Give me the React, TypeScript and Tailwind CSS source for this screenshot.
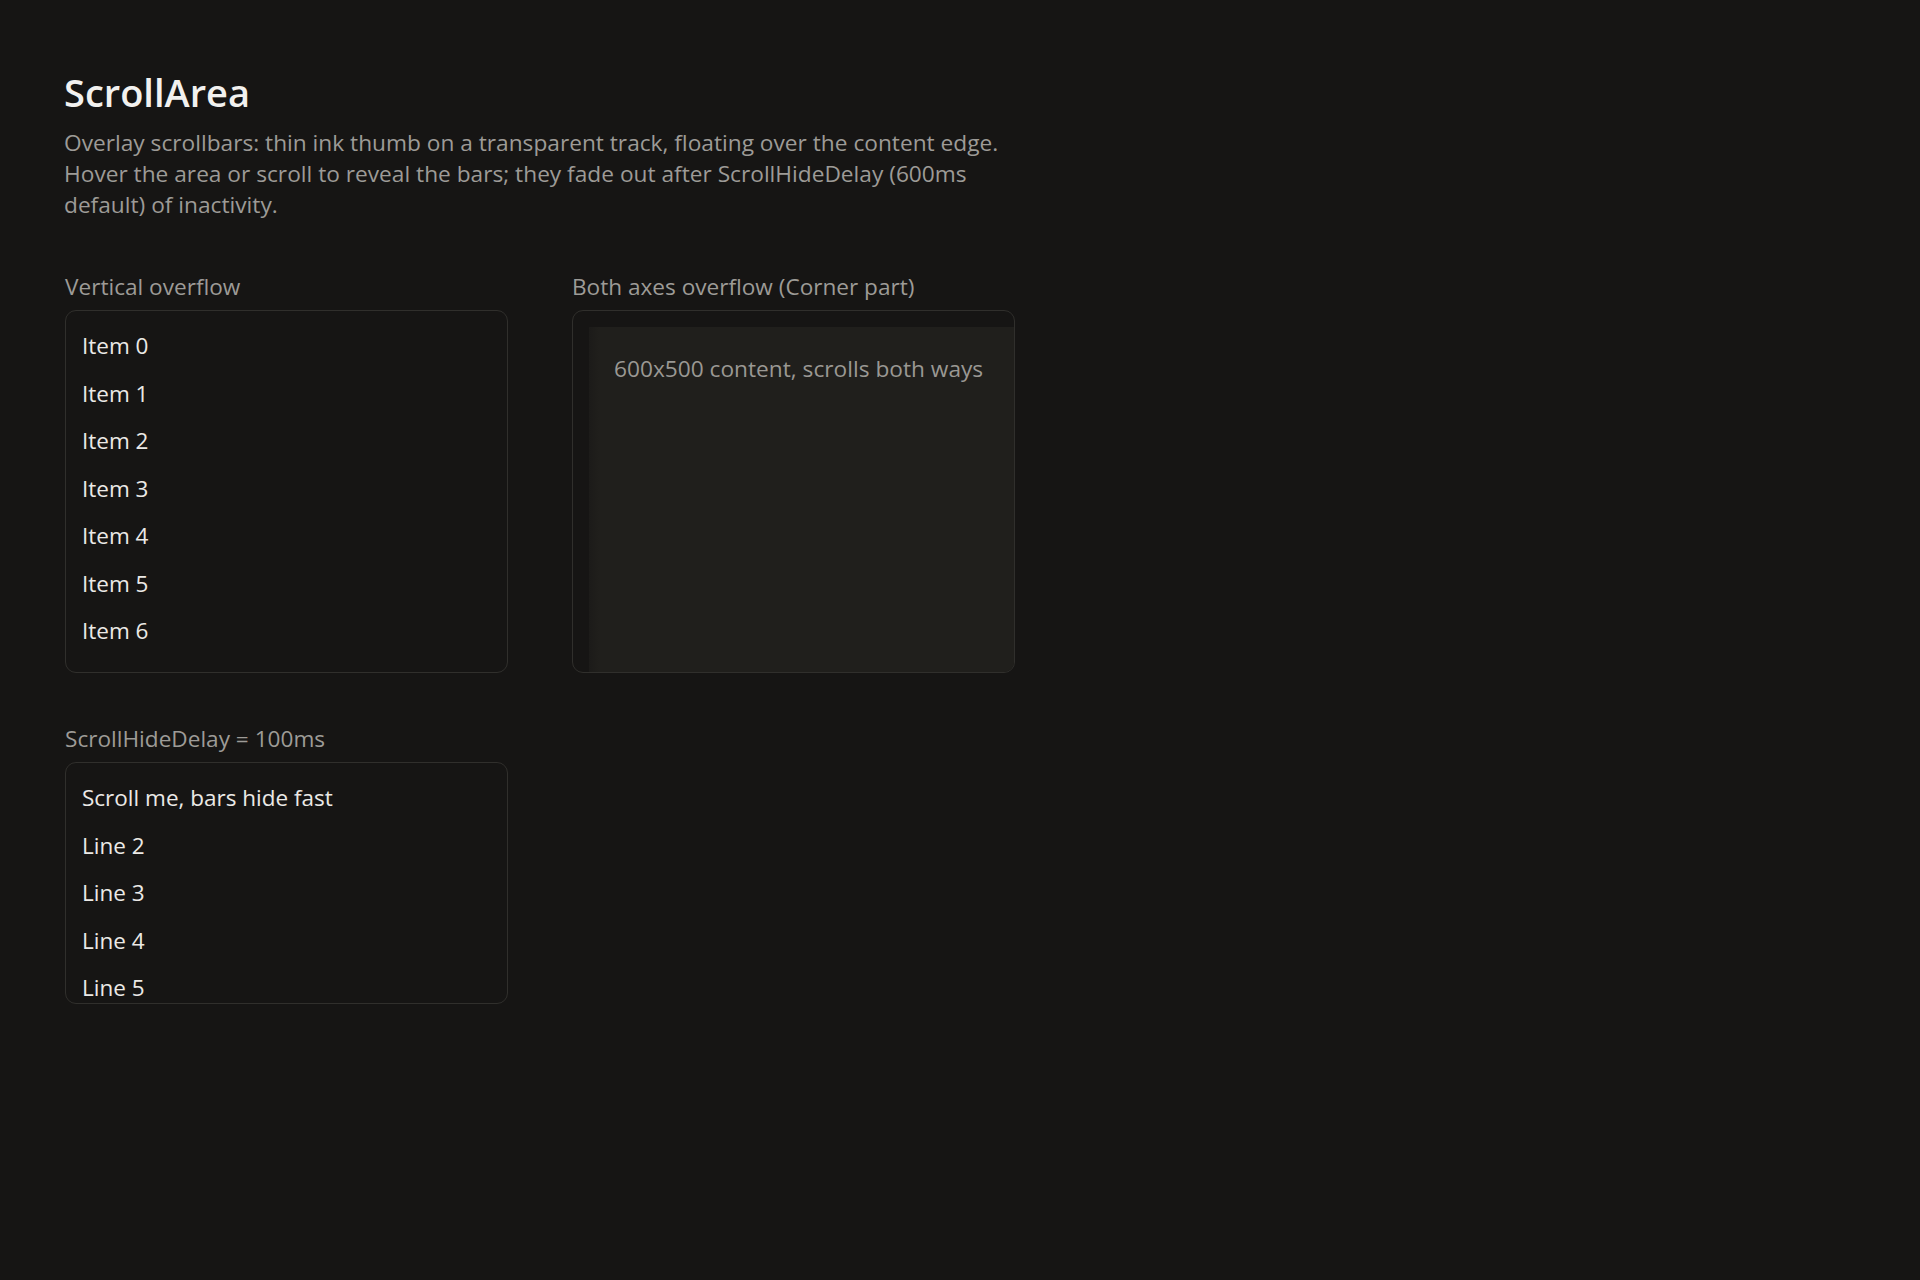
const items = ["Item 0", "Item 1", "Item 2", "Item 3", "Item 4", "Item 5", "Item 6"];
const lines = ["Scroll me, bars hide fast", "Line 2", "Line 3", "Line 4", "Line 5"];

function Section({ label, children }: { label: string; children: React.ReactNode }) {
  return (
    <div className="flex flex-col">
      <div className="mb-2 text-[22.6px] leading-[30px] text-[#9d9b97]">{label}</div>
      {children}
    </div>
  );
}

export default function App() {
  return (
    <div className="min-h-screen bg-[#161514] pl-16 pt-[68px] font-['Open_Sans',sans-serif]">
      <h1 className="text-[38px] leading-[48px] font-semibold text-[#f2f1ef]">ScrollArea</h1>
      <p className="mt-[11px] max-w-[960px] text-[22.7px] leading-[31px] text-[#9d9b97]">
        Overlay scrollbars: thin ink thumb on a transparent track, floating over the content edge. Hover the area or scroll to reveal the bars; they fade out after ScrollHideDelay (600ms default) of inactivity.
      </p>

      <div className="ml-px mt-[52px] grid grid-cols-[443px_443px] gap-x-16 gap-y-[51px]">
        <Section label="Vertical overflow">
          <div className="h-[363px] overflow-hidden rounded-[11px] border-[1.5px] border-[#302f2c] bg-[#161514]">
            <div className="px-4 pt-[11px]">
              {items.map((t) => (
                <div key={t} className="h-[47.5px] text-[22.5px] leading-[47.5px] text-[#ebe9e6]">
                  {t}
                </div>
              ))}
            </div>
          </div>
        </Section>

        <Section label="Both axes overflow (Corner part)">
          <div className="h-[363px] overflow-hidden rounded-[11px] border-[1.5px] border-[#302f2c] bg-[#161514] pl-4 pt-4">
            <div className="h-[500px] w-[600px] bg-[linear-gradient(90deg,#1c1b19_0px,#201f1c_10px)] pl-[25px] pt-[26px] text-[22.7px] leading-[31px] text-[#9a9893]">
              600x500 content, scrolls both ways
            </div>
          </div>
        </Section>

        <Section label="ScrollHideDelay = 100ms">
          <div className="h-[242px] overflow-hidden rounded-[11px] border-[1.5px] border-[#302f2c] bg-[#161514]">
            <div className="px-4 pt-[11px]">
              {lines.map((t) => (
                <div key={t} className="h-[47.5px] text-[22.5px] leading-[47.5px] text-[#ebe9e6]">
                  {t}
                </div>
              ))}
            </div>
          </div>
        </Section>
      </div>
    </div>
  );
}
